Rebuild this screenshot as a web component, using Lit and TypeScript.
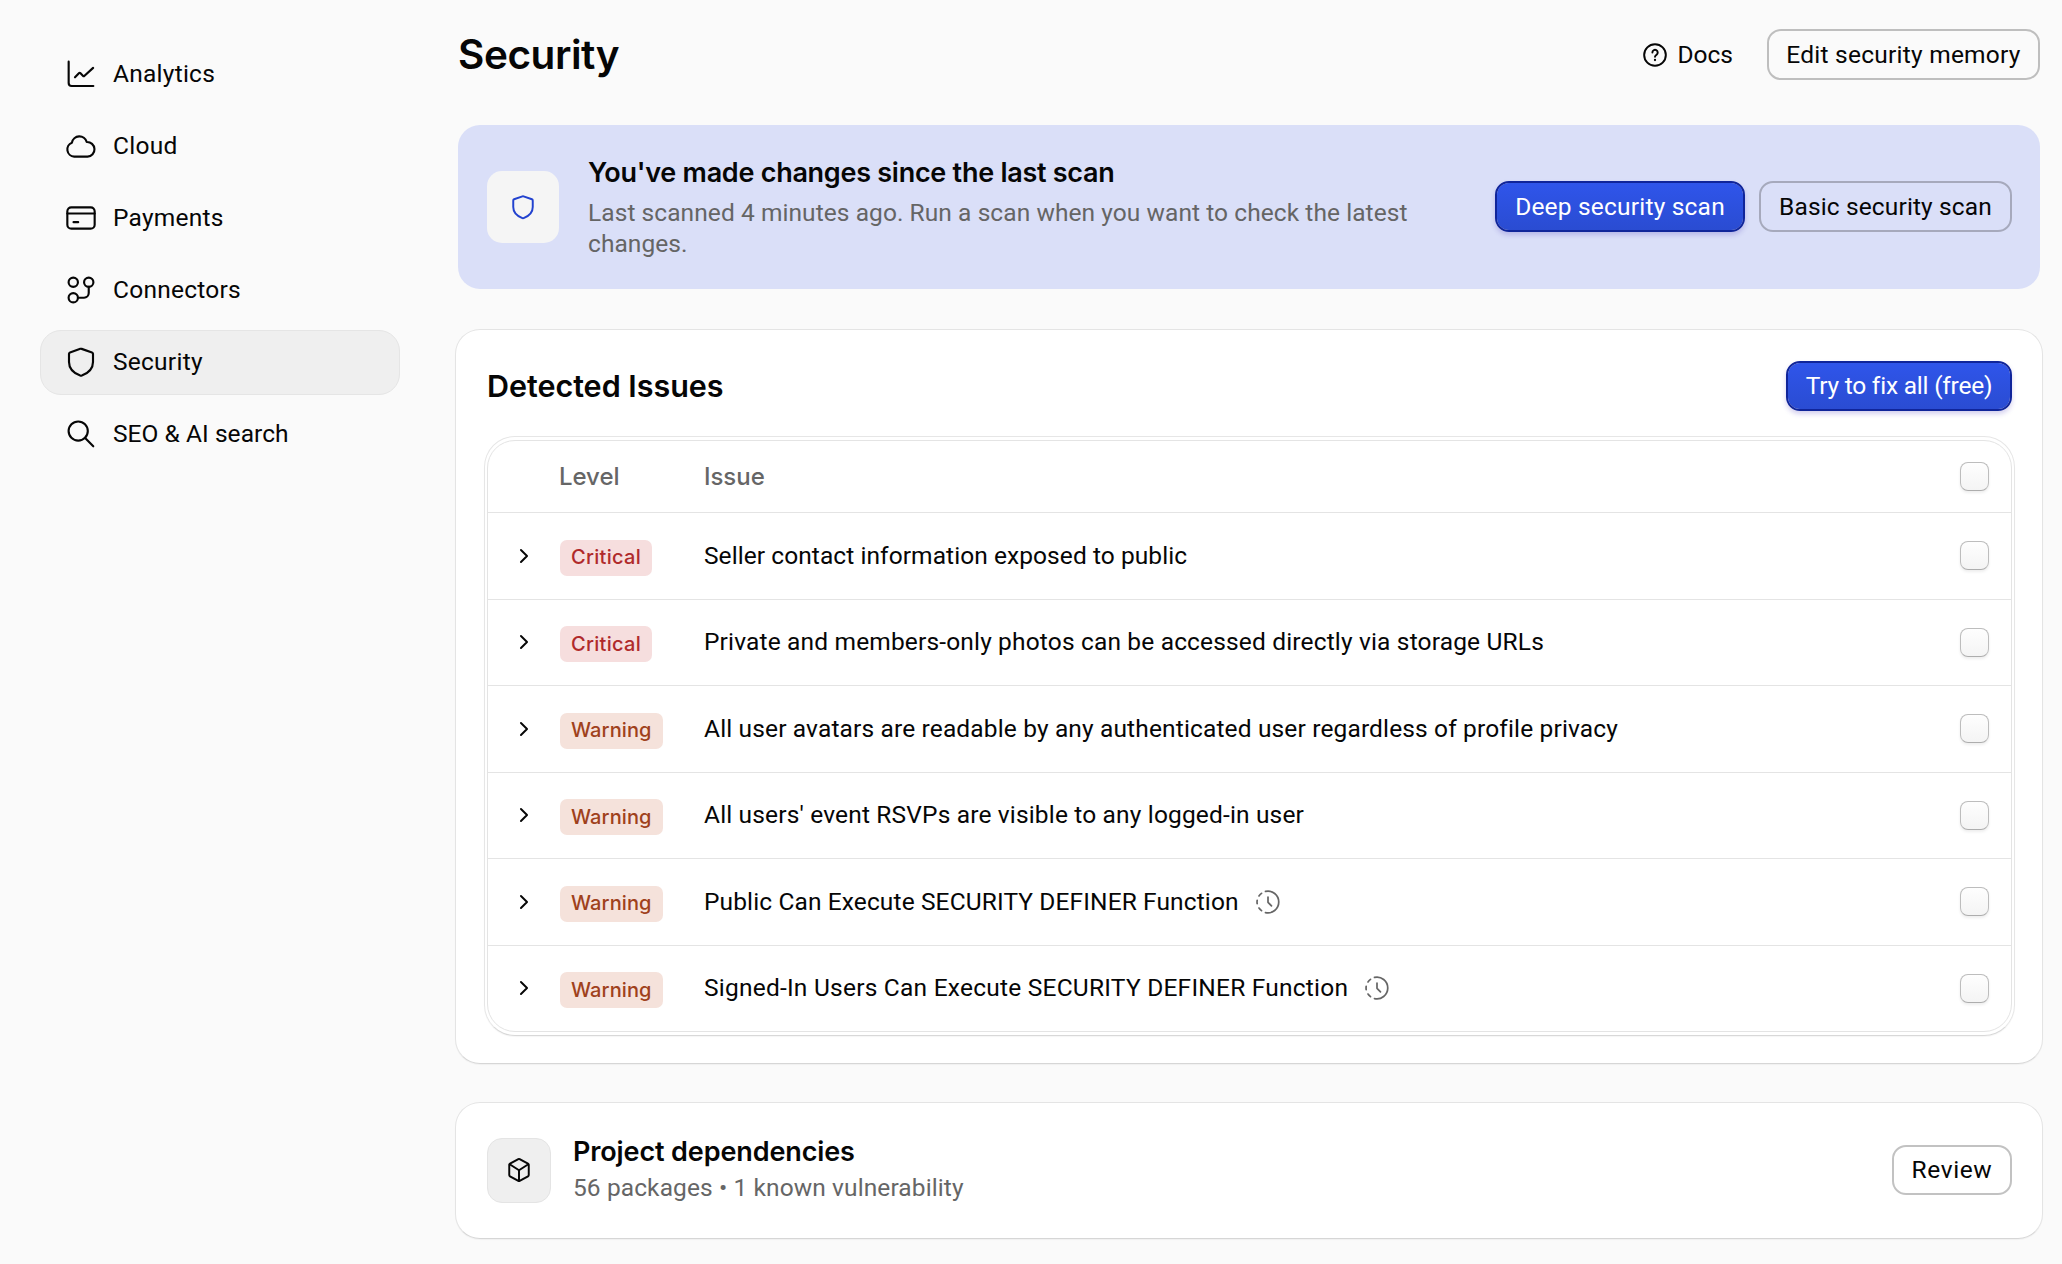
import { LitElement, html, css, svg, nothing, TemplateResult } from "lit";
import { customElement, property } from "lit/decorators.js";
import { classMap } from "lit/directives/class-map.js";
import { styleMap } from "lit/directives/style-map.js";

const shapes: Record<string, TemplateResult> = {
  analytics: svg`<path d="M2.75 2.75v16a2.25 2.25 0 0 0 2.25 2.25h16.25"/><path d="m7.5 14.5 3.1-3.2a.6.6 0 0 1 .85 0l2.15 2.25a.6.6 0 0 0 .85 0L21.1 7.4"/>`,
  cloud: svg`<path d="M6.9 20A5.45 5.45 0 0 1 5.2 9.5 5.7 5.7 0 0 1 16.3 9a5.5 5.5 0 0 1 .6 11Z"/>`,
  payments: svg`<rect x="1.75" y="4" width="20.5" height="16" rx="3"/><path d="M1.75 8.6h20.5M6.4 15.1h3.5"/>`,
  connectors: svg`<circle cx="6.2" cy="6.2" r="3.5"/><circle cx="17.8" cy="6.2" r="3.5"/><circle cx="6.2" cy="17.8" r="3.5"/><path d="M9.7 17.8h4.6a3.5 3.5 0 0 0 3.5-3.5V9.7"/>`,
  shield: svg`<path d="M3 5.9c0-.5.3-.9.75-1.05l7.75-2.7q.5-.17 1 0l7.75 2.7c.45.15.75.55.75 1.05V12c0 5.2-3.6 8.4-8.4 10.2q-.6.2-1.2 0C6.6 20.4 3 17.2 3 12Z"/>`,
  search: svg`<circle cx="9.9" cy="9.8" r="7.2"/><path d="m15.1 15 6.1 6.2"/>`,
  help: svg`<circle cx="12" cy="12" r="10"/><path d="M9.6 9.7a2.45 2.45 0 1 1 3.9 2c-.9.65-1.5 1.05-1.5 2"/><path d="M12 16.6v.1" stroke-width="2.1"/>`,
  cube: svg`<path d="M11.4 1.9q.6-.35 1.2 0l7.7 4.3q.7.4.7 1.2v9.2q0 .8-.7 1.2l-7.7 4.3q-.6.35-1.2 0l-7.7-4.3q-.7-.4-.7-1.2V7.4q0-.8.7-1.2Z"/><path d="m3.4 6.7 8.6 5.5 8.6-5.5M12 12.2V22"/>`,
  chevron: svg`<path d="M9.2 6.5 14.8 12l-5.6 5.5"/>`,
  history: svg`<path d="M9.7 2.25a10 10 0 1 1 0 19.5M3.7 6.4A10 10 0 0 1 6 4M2 13.5a10 10 0 0 1 0-3M6 20a10 10 0 0 1-2.3-2.4M12 7.4v4.9l3.2 3.2"/>`,
};

@customElement("line-icon")
class LineIcon extends LitElement {
  @property() name = "";
  @property({ type: Number }) size = 26;
  @property({ type: Number }) weight = 1.8;
  static styles = css`
    :host { display: inline-flex; flex: none; }
    .glyph { display: block; fill: none; stroke: currentColor; stroke-linecap: round; stroke-linejoin: round; }
  `;
  render() {
    return html`<svg class="glyph" viewBox="0 0 24 24" width=${this.size} height=${this.size} stroke-width=${this.weight}>${shapes[this.name]}</svg>`;
  }
}

const nav = [
  { icon: "analytics", label: "Analytics" },
  { icon: "cloud", label: "Cloud" },
  { icon: "payments", label: "Payments" },
  { icon: "connectors", label: "Connectors" },
  { icon: "shield", label: "Security", active: true },
  { icon: "search", label: "SEO & AI search", tracking: 0.05 },
];

const issues = [
  { level: "Critical", title: "Seller contact information exposed to public", tracking: 0.07 },
  { level: "Critical", title: "Private and members-only photos can be accessed directly via storage URLs", tracking: 0.16 },
  { level: "Warning", title: "All user avatars are readable by any authenticated user regardless of profile privacy", tracking: 0.145 },
  { level: "Warning", title: "All users' event RSVPs are visible to any logged-in user", tracking: 0.16 },
  { level: "Warning", title: "Public Can Execute SECURITY DEFINER Function", tracking: 0.12, stale: true },
  { level: "Warning", title: "Signed-In Users Can Execute SECURITY DEFINER Function", tracking: 0.23, stale: true },
];

@customElement("app-root")
class AppRoot extends LitElement {
  static styles = css`
    :host {
      display: flex; box-sizing: border-box; height: 1264px; overflow: hidden;
      background: #fafafa; color: #060606;
      font: 400 24.5px/32px Roboto, "Liberation Sans", sans-serif; letter-spacing: 0.16px;
    }
    * { box-sizing: border-box; }
    .sidebar { flex: none; width: 455px; padding: 42px 55px 0 40px; display: flex; flex-direction: column; gap: 7px; }
    .nav-item { height: 65px; display: flex; align-items: center; gap: 16px; padding: 0 24px 2px; border: 1px solid transparent; border-radius: 21px; letter-spacing: 0.25px; }
    .nav-item.active { background: #efefef; border-color: #e5e5e5; }
    .main { flex: none; width: 1588px; padding-top: 29px; display: flex; flex-direction: column; }
    .header { height: 51px; margin: 0 3px; display: flex; align-items: center; }
    .page-title { margin: 0; flex: 1; padding-top: 1px; font-family: Inter, sans-serif; font-size: 40.5px; line-height: 50px; font-weight: 600; letter-spacing: -0.45px; }
    .docs { display: flex; align-items: center; gap: 9px; margin-right: 34px; letter-spacing: 0; }
    .btn {
      display: inline-flex; align-items: center; justify-content: center; height: 51px; flex: none;
      border: 2px solid rgba(0, 0, 0, 0.24); border-radius: 14px; white-space: nowrap;
    }
    .btn.primary {
      color: #fff; border-color: #10259a; background: linear-gradient(#2f55ea, #2a4cd2) padding-box;
      box-shadow: 0 3px 5px rgba(60, 40, 180, 0.22);
    }
    .btn.edit { width: 273px; letter-spacing: 0.24px; }
    .btn.deep { width: 250px; letter-spacing: 0.2px; }
    .btn.basic { width: 253px; letter-spacing: 0.13px; margin-left: 14px; }
    .btn.fix { width: 226px; height: 50px; letter-spacing: -0.22px; }
    .btn.review { width: 120px; height: 50px; letter-spacing: 0.6px; margin-bottom: 2px; }
    .banner { margin: 45px 3px 0; height: 164px; padding: 0 28px 1px 29px; display: flex; align-items: center; border-radius: 22px; background: #dadff8; }
    .banner-icon { flex: none; width: 72px; height: 72px; display: flex; align-items: center; justify-content: center; border-radius: 15px; background: #f5f5f5; color: #2242cf; }
    .banner-text { flex: 1; padding: 0 27px 0 29px; }
    .banner-title { font-family: Inter, sans-serif; font-size: 27px; line-height: 36px; font-weight: 600; letter-spacing: -0.27px; }
    .banner-desc { margin-top: 6px; line-height: 31px; color: #656565; letter-spacing: 0.07px; }
    .card {
      border: 1px solid #e4e4e4; border-bottom-color: #d6d6d6; border-radius: 25px; background: #fff;
      box-shadow: 0 1px 1px rgba(0, 0, 0, 0.04);
    }
    .issues-card { margin-top: 40px; height: 735px; padding: 31px 27px 0 28px; }
    .card-head { height: 50px; padding: 0 3px 0 3px; display: flex; align-items: center; justify-content: space-between; }
    .card-title { margin: 0; font-family: Inter, sans-serif; font-size: 30.5px; line-height: 40px; font-weight: 600; letter-spacing: -0.03px; }
    .table-frame {
      margin-top: 25px; padding: 3px 2px; border: 1px solid #e6e6e6; border-bottom-color: #d8d8d8; border-radius: 31px;
      box-shadow: 0 1px 1px rgba(0, 0, 0, 0.04);
    }
    .table { border: 1px solid #e4e4e4; border-radius: 28px; display: flex; flex-direction: column; height: 592px; overflow: hidden; }
    .row { display: grid; grid-template-columns: 72px 144px 1fr auto; align-items: center; flex: 1; border-top: 1px solid #e4e4e4; padding-right: 22px; }
    .row.head { flex: none; height: 71px; border-top: none; color: #666; font-family: Inter, sans-serif; font-size: 24px; font-weight: 500; letter-spacing: -0.05px; }
    .expand { display: flex; justify-content: center; }
    .col-level { margin-left: -1px; }
    .badge {
      justify-self: start; height: 36px; margin-top: 4px; padding: 0 11px 1px; display: flex; align-items: center; border-radius: 7px;
      font-family: Inter, sans-serif; font-size: 20px; font-weight: 500; letter-spacing: 0.1px;
    }
    .badge.critical { background: #f6dede; color: #b02a2b; letter-spacing: 0.3px; }
    .badge.warning { background: #f5e2db; color: #9f411c; }
    .issue { display: flex; align-items: center; white-space: nowrap; }
    .stale { display: flex; margin-left: 16px; color: #666; }
    .check {
      width: 29px; height: 29px; border: 1.5px solid #bdbdbd; border-bottom-color: #adadad; border-radius: 8px;
      background: linear-gradient(#fefefe, #f4f4f4); box-shadow: 0 2px 3px rgba(0, 0, 0, 0.07);
    }
    .deps-card { margin-top: 38px; height: 137px; padding: 0 30px 0 31px; display: flex; align-items: center; }
    .deps-icon { flex: none; width: 64px; height: 65px; display: flex; align-items: center; justify-content: center; border: 1px solid #e4e4e4; border-radius: 15px; background: #efefef; padding-bottom: 1px; }
    .deps-text { flex: 1; margin-left: 22px; padding-bottom: 4px; }
    .deps-title { font-family: Inter, sans-serif; font-size: 27px; line-height: 36px; font-weight: 600; letter-spacing: -0.12px; }
    .deps-sub { margin-top: 2px; color: #666; letter-spacing: 0.1px; }
  `;

  private tracked(value?: number) {
    return styleMap(value === undefined ? {} : { letterSpacing: `${value}px` });
  }

  render() {
    return html`
      <nav class="sidebar">
        ${nav.map((n) => html`
          <div class=${classMap({ "nav-item": true, active: !!n.active })}>
            <line-icon name=${n.icon} .size=${32} .weight=${1.6}></line-icon>
            <span style=${this.tracked(n.tracking)}>${n.label}</span>
          </div>`)}
      </nav>
      <main class="main">
        <header class="header">
          <h1 class="page-title">Security</h1>
          <div class="docs"><line-icon name="help"></line-icon>Docs</div>
          <div class="btn edit">Edit security memory</div>
        </header>
        <section class="banner">
          <div class="banner-icon"><line-icon name="shield"></line-icon></div>
          <div class="banner-text">
            <div class="banner-title">You've made changes since the last scan</div>
            <div class="banner-desc">Last scanned 4 minutes ago. Run a scan when you want to check the latest changes.</div>
          </div>
          <div class="btn primary deep">Deep security scan</div>
          <div class="btn basic">Basic security scan</div>
        </section>
        <section class="card issues-card">
          <div class="card-head">
            <h2 class="card-title">Detected Issues</h2>
            <div class="btn primary fix">Try to fix all (free)</div>
          </div>
          <div class="table-frame">
            <div class="table">
              <div class="row head"><span></span><span class="col-level">Level</span><span>Issue</span><span class="check"></span></div>
              ${issues.map((i) => html`
                <div class="row">
                  <span class="expand"><line-icon name="chevron"></line-icon></span>
                  <span class="badge ${i.level.toLowerCase()}">${i.level}</span>
                  <span class="issue">
                    <span style=${this.tracked(i.tracking)}>${i.title}</span>
                    ${i.stale ? html`<span class="stale"><line-icon name="history" .weight=${1.6}></line-icon></span>` : nothing}
                  </span>
                  <span class="check"></span>
                </div>`)}
            </div>
          </div>
        </section>
        <section class="card deps-card">
          <div class="deps-icon"><line-icon name="cube"></line-icon></div>
          <div class="deps-text">
            <div class="deps-title">Project dependencies</div>
            <div class="deps-sub">56 packages • 1 known vulnerability</div>
          </div>
          <div class="btn review">Review</div>
        </section>
      </main>
    `;
  }
}
